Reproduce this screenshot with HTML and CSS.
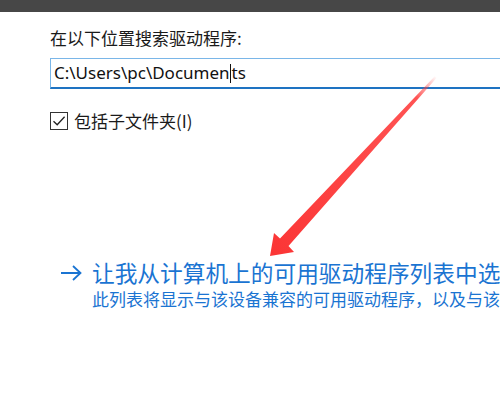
FILE: index.html
```html
<!DOCTYPE html>
<html lang="zh-CN">
<head>
<meta charset="utf-8">
<link rel="stylesheet" href="styles.css">
</head>
<body>
<div class="titlebar"></div>
<main class="content">
  <div class="label">在以下位置搜索驱动程序:</div>
  <div class="input"><span>C:\Users\pc\Documen</span><span class="caret"></span><span>ts</span></div>
  <label class="check">
    <span class="box"><svg width="18" height="18" viewBox="0 0 18 18"><path d="M3.5 9.2 L7.2 12.8 L14.6 4.8" fill="none" stroke="#222" stroke-width="1.3"/></svg></span>
    <span class="check-text">包括子文件夹(I)</span>
  </label>
  <div class="option">
    <div class="option-title">
      <svg class="arrow" width="22" height="16" viewBox="0 0 22 16"><path d="M1 8 H20.5 M13 1 L20.5 8 L13 15" fill="none" stroke="#1a74d2" stroke-width="1.8"/></svg>
      <span class="title-text">让我从计算机上的可用驱动程序列表中选取</span>
    </div>
    <div class="option-desc">此列表将显示与该设备兼容的可用驱动程序，以及与该设备属于同一类别的所有驱动程序。</div>
  </div>
</main>
<svg class="redarrow" width="500" height="400" viewBox="0 0 500 400">
  <defs>
    <linearGradient id="g" x1="436" y1="76" x2="270" y2="256" gradientUnits="userSpaceOnUse">
      <stop offset="0" stop-color="#ff4040" stop-opacity="0"/>
      <stop offset="0.12" stop-color="#ff4040" stop-opacity="0.9"/>
      <stop offset="1" stop-color="#fb3535"/>
    </linearGradient>
  </defs>
  <polygon points="435,76 436.5,78 288.5,246 294,252 270,256 274,233 280,238.5" fill="url(#g)"/>
</svg>
</body>
</html>
```
FILE: styles.css
```css
html, body {
  margin: 0;
  padding: 0;
  background: #fff;
  width: 500px;
  height: 400px;
  overflow: hidden;
  font-family: "Noto Sans", "Noto Sans CJK SC", sans-serif;
}
.titlebar {
  height: 12px;
  background: #474747;
}
.content {
  padding-left: 50px;
  overflow: hidden;
}
.label {
  margin-top: 15px;
  font-family: "Noto Sans CJK SC", sans-serif;
  font-size: 17px;
  line-height: 22px;
  color: #1a1a1a;
}
.input {
  margin-top: 9px;
  height: 28px;
  border: 1px solid #7ab6e8;
  border-bottom: 2px solid #1e73c2;
  border-right: none;
  padding-left: 3px;
  font-family: "Noto Sans", sans-serif;
  font-size: 17px;
  line-height: 28px;
  color: #111;
  white-space: nowrap;
  display: flex;
  align-items: center;
}
.caret {
  display: inline-block;
  width: 1px;
  height: 19px;
  background: #111;
  margin: 0 0.5px;
}
.check {
  margin-top: 22px;
  display: flex;
  align-items: center;
  gap: 6px;
}
.box {
  width: 18px;
  height: 18px;
  border: 1px solid #333;
  display: flex;
  box-sizing: border-box;
}
.box svg {
  margin: -1px;
  flex: none;
}
.check-text {
  font-family: "Noto Sans CJK SC", sans-serif;
  font-size: 17px;
  line-height: 20px;
  color: #1a1a1a;
}
.option {
  margin-top: 129px;
  margin-left: 10px;
  color: #1a74d2;
  white-space: nowrap;
}
.option-title {
  display: flex;
  align-items: center;
  gap: 10px;
  font-family: "Noto Sans CJK SC", sans-serif;
  font-size: 22.7px;
  line-height: 26px;
}
.arrow {
  flex: none;
}
.option-desc {
  margin-left: 32px;
  margin-top: 3px;
  font-family: "Noto Sans CJK SC", sans-serif;
  font-size: 17px;
  line-height: 19px;
}
.redarrow {
  position: absolute;
  left: 0;
  top: 0;
  pointer-events: none;
}
```
